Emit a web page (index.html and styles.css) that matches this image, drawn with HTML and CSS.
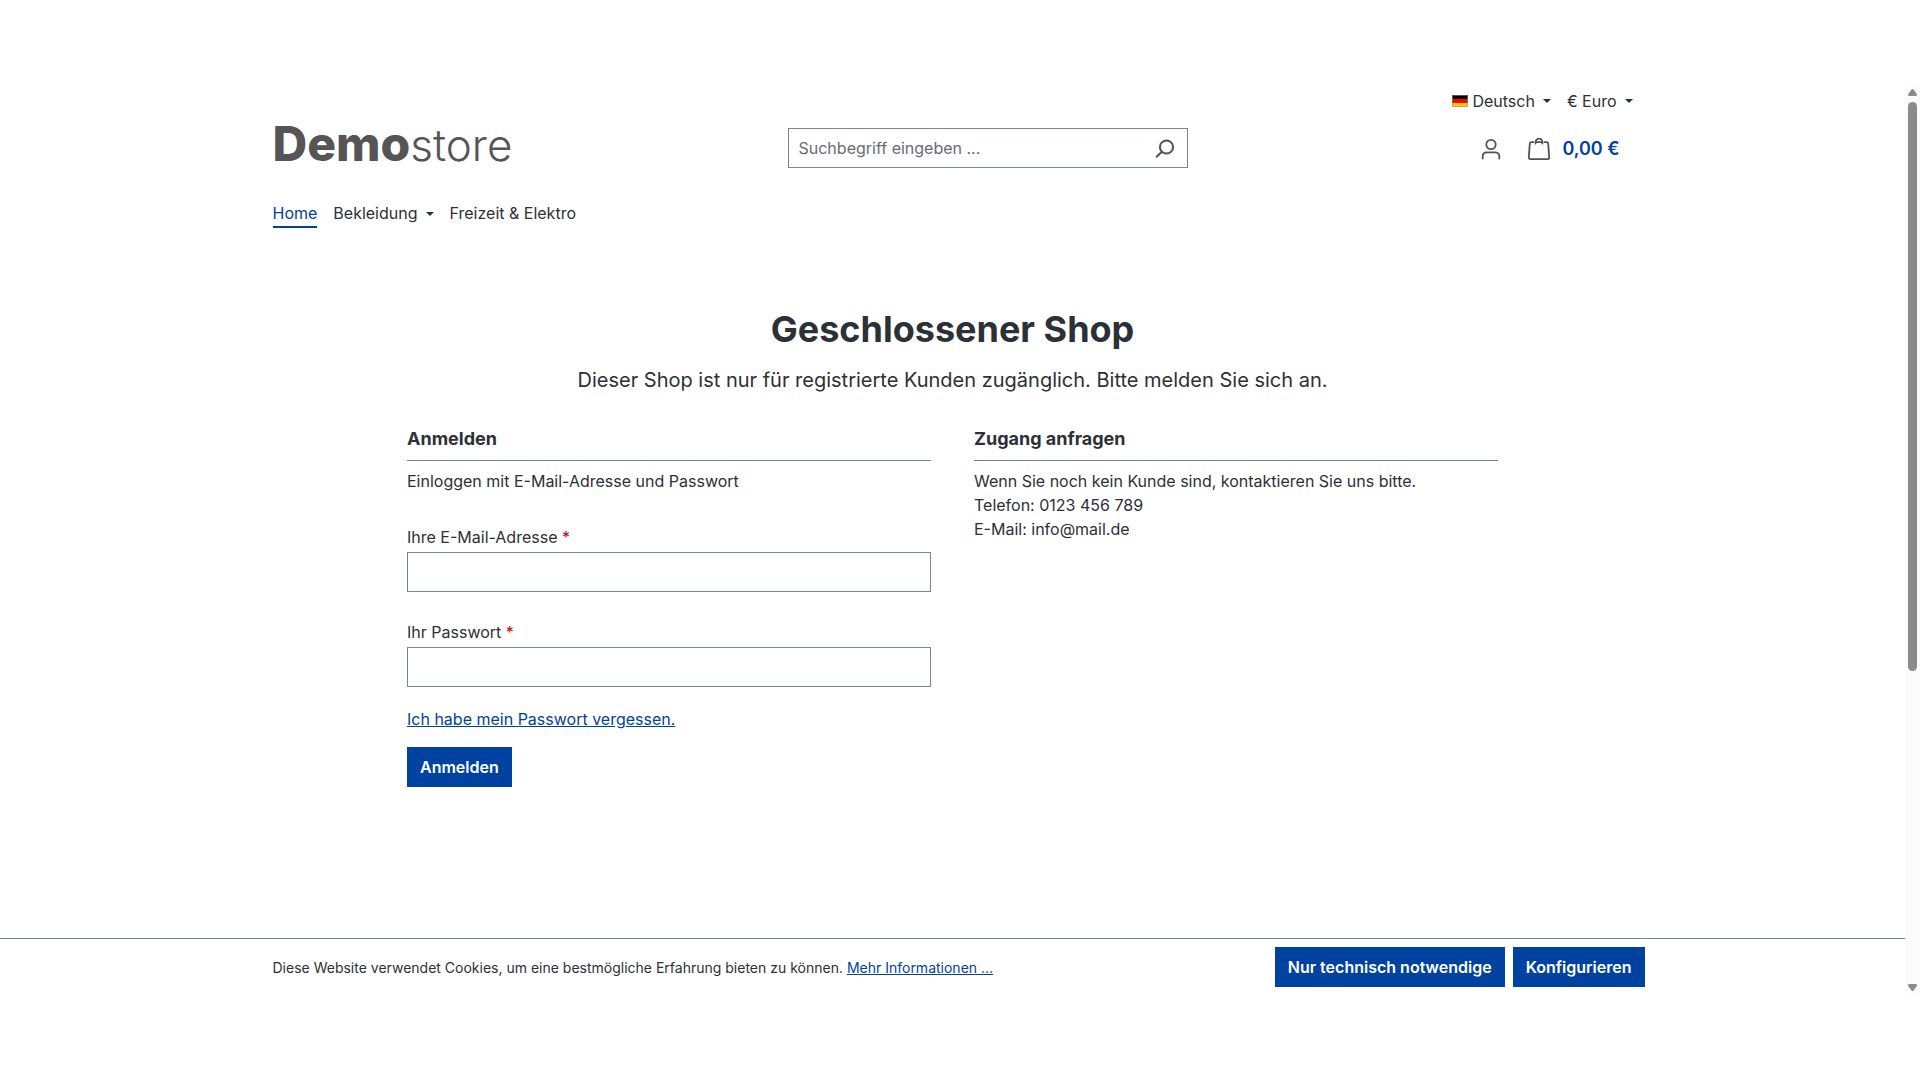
FILE: index.html
```
<!DOCTYPE html>
<html lang="de">
<head>
<meta charset="utf-8">
<meta name="viewport" content="width=device-width, initial-scale=1">
<title>Demostore</title>
<link rel="stylesheet" href="styles.css">
</head>
<body>
<div class="page">
  <header class="container">
    <div class="top-bar">
      <button class="top-button" type="button">
        <svg class="flag" viewBox="0 0 16 12" aria-hidden="true"><path fill="#000" d="M0 0h16v4H0z"/><path fill="#f00" d="M0 4h16v4H0z"/><path fill="#fc0" d="M0 8h16v4H0z"/><path fill="none" stroke="#8a939f" d="M.5.5h15v11H.5z" opacity=".6"/></svg>
        <span>Deutsch</span><span class="caret"></span>
      </button>
      <button class="top-button" type="button"><span>€ Euro</span><span class="caret"></span></button>
    </div>
    <div class="header-row">
      <a class="logo" href="#"><span class="logo-strong">Demo</span><span class="logo-light">store</span></a>
      <form class="search" role="search">
        <input class="search-input" type="search" placeholder="Suchbegriff eingeben ..." aria-label="Suchbegriff">
        <button class="search-button" type="submit" aria-label="Suchen">
          <svg class="icon" viewBox="0 0 22 22" aria-hidden="true"><circle cx="12.5" cy="10" r="6.6"/><path d="M7.8 14.7 2.7 19.8"/></svg>
        </button>
      </form>
      <div class="actions">
        <button class="icon-button" type="button" aria-label="Mein Konto">
          <svg class="icon" viewBox="0 0 22 22" aria-hidden="true"><circle cx="11" cy="6.5" r="4.7"/><path d="M2.7 20.5v-2.2a4 4 0 0 1 4-4h8.6a4 4 0 0 1 4 4v2.2"/></svg>
        </button>
        <a class="cart" href="#">
          <svg class="icon" viewBox="0 0 22 22" aria-hidden="true"><path d="M5.4 4.2H3.3a1.5 1.5 0 0 0-1.5 1.4L.8 19.4a1.7 1.7 0 0 0 1.7 1.8h17a1.7 1.7 0 0 0 1.7-1.8l-1-13.8a1.5 1.5 0 0 0-1.5-1.4h-2.1M13.3 4.2H8.7"/><path d="M7.6 5.6V4a3.4 3.4 0 0 1 6.8 0v1.6"/></svg>
          <span>0,00 €</span>
        </a>
      </div>
    </div>
    <nav class="nav">
      <a class="nav-link nav-link-active" href="#">Home</a>
      <a class="nav-link" href="#">Bekleidung<span class="caret"></span></a>
      <a class="nav-link" href="#">Freizeit &amp; Elektro</a>
    </nav>
  </header>

  <main class="content">
    <h1 class="title">Geschlossener Shop</h1>
    <p class="lead">Dieser Shop ist nur für registrierte Kunden zugänglich. Bitte melden Sie sich an.</p>
    <div class="columns">
      <section>
        <h2 class="card-title">Anmelden</h2>
        <form class="login">
          <p class="text">Einloggen mit E-Mail-Adresse und Passwort</p>
          <div class="field">
            <label for="mail">Ihre E-Mail-Adresse <span class="required">*</span></label>
            <input class="input" id="mail" type="email">
          </div>
          <div class="field">
            <label for="password">Ihr Passwort <span class="required">*</span></label>
            <input class="input" id="password" type="password">
          </div>
          <a class="link forgot" href="#">Ich habe mein Passwort vergessen.</a>
          <button class="button" type="submit">Anmelden</button>
        </form>
      </section>
      <section>
        <h2 class="card-title">Zugang anfragen</h2>
        <p class="text">Wenn Sie noch kein Kunde sind, kontaktieren Sie uns bitte.<br>Telefon: 0123 456 789<br>E-Mail: info@mail.de</p>
      </section>
    </div>
  </main>

  <div class="cookie-bar">
    <div class="cookie-inner">
      <p class="cookie-text">Diese Website verwendet Cookies, um eine bestmögliche Erfahrung bieten zu können. <a class="link" href="#">Mehr Informationen ...</a></p>
      <button class="button" type="button">Nur technisch notwendige</button>
      <button class="button" type="button">Konfigurieren</button>
    </div>
  </div>
</div>
<div class="scrollbar" aria-hidden="true">
  <svg class="scroll-arrow" viewBox="0 0 9 7"><path d="M4.5 0q.6 0 1 .6L8.8 5q.6 1.5-.8 2H1q-1.400-.5-.8-2L3.500.6q.4-.6 1-.6z"/></svg>
  <div class="scroll-track"><div class="scroll-thumb"></div></div>
  <svg class="scroll-arrow" viewBox="0 0 9 7"><path d="M4.5 7q.6 0 1-.6L8.8 2q.6-1.5-.8-2H1q-1.400.5-.8 2l3.300 4.400q.4.6 1 .6z"/></svg>
</div>
</body>
</html>
```

FILE: styles.css
```
* {
  box-sizing: border-box;
}

body {
  margin: 0;
  min-height: 100vh;
  padding: 84px 0 85px;
  display: flex;
  background: #fff;
  color: #2b3136;
  font: 16px/24px Inter, "Liberation Sans", sans-serif;
}

h1, h2, p {
  margin: 0;
}

button, input {
  font: inherit;
  color: inherit;
  border-radius: 0;
}

button {
  border: 0;
  padding: 0;
  background: none;
  cursor: pointer;
}

a {
  color: inherit;
  text-decoration: none;
}

.page {
  flex: 1;
  min-width: 0;
  display: flex;
  flex-direction: column;
}

.container {
  width: 100%;
  max-width: 1400px;
  margin: 0 auto;
  padding: 0 20px;
}

.top-bar {
  display: flex;
  justify-content: flex-end;
  gap: 16px;
  padding: 5px 0;
}

.top-button {
  display: flex;
  align-items: center;
}

.flag {
  width: 16px;
  height: 12px;
  margin-right: 4px;
}

.caret {
  display: inline-block;
  margin-left: 8px;
  border: 4px solid transparent;
  border-top-color: currentColor;
  border-bottom: 0;
  vertical-align: 3px;
}

.header-row {
  display: grid;
  grid-template-columns: minmax(0, 515px) minmax(0, 400px) 1fr;
  align-items: center;
  padding: 10px 0;
}

.logo {
  padding-bottom: 8px;
  font-size: 48px;
  line-height: 32px;
  color: #555;
}

.logo-strong {
  font-weight: 800;
}

.logo-light {
  font-size: 44px;
  line-height: 24px;
  font-weight: 300;
}

.search {
  display: flex;
  height: 40px;
  border: 1px solid #798490;
}

.search-input {
  flex: 1;
  min-width: 0;
  border: 0;
  padding: 0 10px;
  background: none;
}

.search-input::placeholder {
  color: #656b76;
  opacity: 1;
}

.search-button {
  display: flex;
  align-items: center;
  padding: 0 11px;
}

.icon {
  width: 22px;
  height: 22px;
  fill: none;
  stroke: #4a545b;
  stroke-width: 2;
  stroke-linecap: round;
  stroke-linejoin: round;
}

.actions .icon {
  stroke-width: 1.8;
}

.actions {
  display: flex;
  justify-content: flex-end;
  align-items: center;
  gap: 26px;
  padding: 2px 13px 0 0;
}

.icon-button {
  display: flex;
}

.cart {
  display: flex;
  align-items: center;
  gap: 12px;
  color: #0042a0;
  font-size: 18px;
  font-weight: 600;
}

.nav {
  display: flex;
  gap: 16px;
  padding-top: 23px;
}

.nav-link {
  padding-bottom: 1px;
  border-bottom: 2px solid transparent;
}

.nav-link-active {
  color: #0042a0;
  border-color: #0042a0;
}

.content {
  width: 100%;
  max-width: 1091px;
  margin: 0 auto;
  padding: 79px 0 40px;
}

.title {
  font-size: 36px;
  line-height: 44px;
  font-weight: 700;
  text-align: center;
}

.lead {
  margin-top: 14px;
  font-size: 20px;
  line-height: 30px;
  text-align: center;
}

.columns {
  display: grid;
  grid-template-columns: 1fr 1fr;
  gap: 43px;
  margin-top: 32px;
}

.card-title {
  padding-bottom: 9px;
  border-bottom: 1px solid #798490;
  font-size: 18px;
  line-height: 24px;
  font-weight: 700;
}

.text {
  margin-top: 8px;
}

.login {
  display: flex;
  flex-direction: column;
  align-items: flex-start;
}

.field {
  display: flex;
  flex-direction: column;
  gap: 3px;
  width: 100%;
  margin-top: 28px;
}

.text + .field {
  margin-top: 32px;
}

.required {
  color: #c20017;
}

.input {
  width: 100%;
  height: 40px;
  padding: 0 10px;
  border: 1px solid #798490;
  background: #fff;
}

.link {
  color: #0042a0;
  text-decoration: underline;
}

.forgot {
  margin: 20px 0 16px;
}

.button {
  height: 40px;
  padding: 0 13px;
  background: #0042a0;
  color: #fff;
  font-weight: 600;
}

.cookie-bar {
  margin-top: auto;
  padding: 8px 0;
  border-top: 1px solid #798490;
}

.cookie-inner {
  display: flex;
  align-items: center;
  gap: 8px;
  max-width: 1400px;
  margin: 0 auto;
  padding: 0 8px 0 20px;
}

.cookie-text {
  flex: 1;
  padding-top: 2px;
  font-size: 14px;
}

.scrollbar {
  width: 15px;
  display: flex;
  flex-direction: column;
  align-items: center;
  gap: 6px;
  padding: 5px 0 4px;
  background: #fcfcfc;
}

.scroll-arrow {
  width: 9px;
  height: 7px;
  fill: #8b8b8b;
}

.scroll-track {
  flex: 1;
  width: 9px;
}

.scroll-thumb {
  height: 65%;
  border-radius: 5px;
  background: #8b8b8b;
}
```
